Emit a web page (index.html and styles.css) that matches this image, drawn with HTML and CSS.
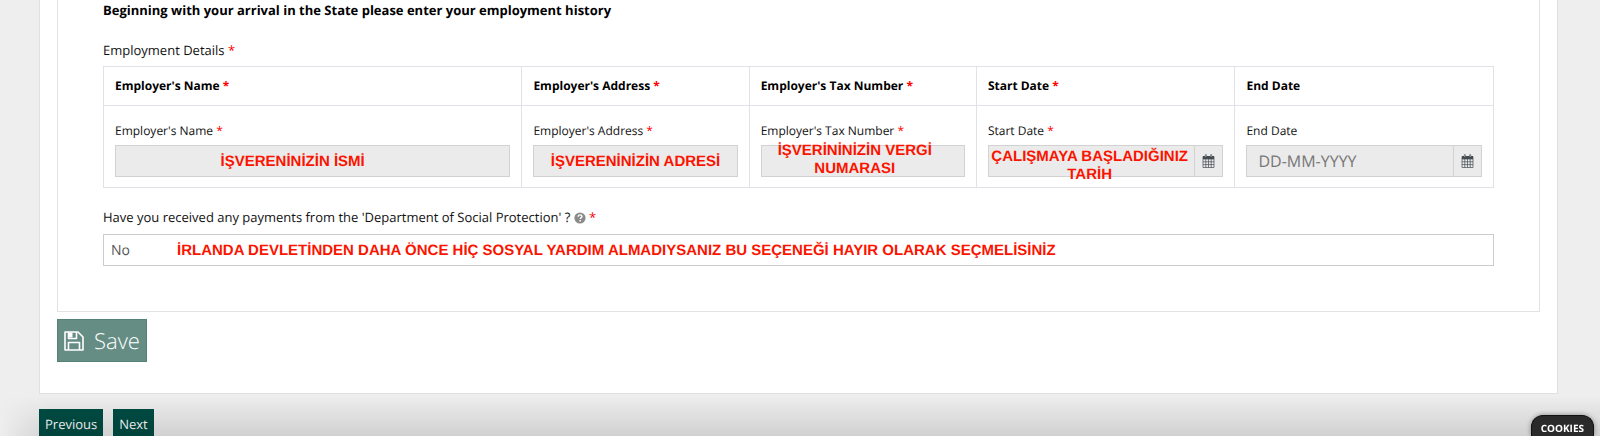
FILE: index.html
```
<!DOCTYPE html>
<html lang="en">
<head>
    <meta charset="UTF-8">
    <meta name="viewport" content="width=device-width, initial-scale=1.0">
    <title>Employment History</title>
    <link rel="stylesheet" href="styles.css">
</head>
<body>

    <main class="card">
        <section class="panel">
            <h1>Beginning with your arrival in the State please enter your employment history</h1>

            <!-- Employment table -->
            <p class="caption" id="details">Employment Details <span class="req">*</span></p>
            <table class="employment" aria-labelledby="details">
                <colgroup>
                    <col class="col-name">
                    <col class="col-text">
                    <col class="col-text">
                    <col>
                    <col>
                </colgroup>
                <thead>
                    <tr>
                        <th>Employer's Name <span class="req">*</span></th>
                        <th>Employer's Address <span class="req">*</span></th>
                        <th>Employer's Tax Number <span class="req">*</span></th>
                        <th>Start Date <span class="req">*</span></th>
                        <th>End Date</th>
                    </tr>
                </thead>
                <tbody>
                    <tr>
                        <td>
                            <label for="name">Employer's Name <span class="req">*</span></label>
                            <div class="field">
                                <input type="text" id="name">
                                <span class="note note-name">İŞVERENİNİZİN İSMİ</span>
                            </div>
                        </td>
                        <td>
                            <label for="address">Employer's Address <span class="req">*</span></label>
                            <div class="field">
                                <input type="text" id="address">
                                <span class="note">İŞVERENİNİZİN ADRESİ</span>
                            </div>
                        </td>
                        <td>
                            <label for="tax">Employer's Tax Number <span class="req">*</span></label>
                            <div class="field">
                                <input type="text" id="tax">
                                <span class="note note-tax">İŞVERİNİNİZİN VERGİ<br>NUMARASI</span>
                            </div>
                        </td>
                        <td>
                            <label for="start">Start Date <span class="req">*</span></label>
                            <div class="field">
                                <input type="text" id="start">
                                <button class="calendar" aria-label="Pick start date">
                                    <svg viewBox="0 0 13 14" width="13" height="14"><path d="M1 2.5h11v11H1zM1 5h11M1 7.8h11M1 10.6h11M3.8 5v8.5M6.5 5v8.5M9.2 5v8.5" fill="none" stroke="#444b50" stroke-width="0.7"/><path d="M1 2h11v3H1z" fill="#444b50"/><path d="M3.8 0.5v3M9.2 0.5v3" stroke="#444b50" stroke-width="1.8"/><path d="M3.8 1v2M9.2 1v2" stroke="#ebebeb" stroke-width="0.6"/></svg>
                                </button>
                                <span class="note note-date">ÇALIŞMAYA BAŞLADIĞINIZ<br>TARİH</span>
                            </div>
                        </td>
                        <td>
                            <label for="end">End Date</label>
                            <div class="field">
                                <input type="text" id="end" placeholder="DD-MM-YYYY">
                                <button class="calendar" aria-label="Pick end date">
                                    <svg viewBox="0 0 13 14" width="13" height="14"><path d="M1 2.5h11v11H1zM1 5h11M1 7.8h11M1 10.6h11M3.8 5v8.5M6.5 5v8.5M9.2 5v8.5" fill="none" stroke="#444b50" stroke-width="0.7"/><path d="M1 2h11v3H1z" fill="#444b50"/><path d="M3.8 0.5v3M9.2 0.5v3" stroke="#444b50" stroke-width="1.8"/><path d="M3.8 1v2M9.2 1v2" stroke="#ebebeb" stroke-width="0.6"/></svg>
                                </button>
                            </div>
                        </td>
                    </tr>
                </tbody>
            </table>

            <!-- Payments question -->
            <label class="question" for="payments">Have you received any payments from the 'Department of Social Protection' ?
                <svg class="help" viewBox="0 0 12 12" width="12" height="12"><circle cx="6" cy="6" r="5.6" fill="#8a8a8a"/><path d="M4.1 4.7C4.2 3.4 5 2.9 6 2.9c1.1 0 1.9.6 1.9 1.6C7.9 5.7 6.2 5.8 6.2 7.1" fill="none" stroke="#fff" stroke-width="1.4"/><path d="M5.4 8h1.5v1.4H5.4z" fill="#fff"/></svg>
                <span class="req">*</span></label>
            <div class="field">
                <select id="payments">
                    <option>No</option>
                    <option>Yes</option>
                </select>
                <span class="note note-payments">İRLANDA DEVLETİNDEN DAHA ÖNCE HİÇ SOSYAL YARDIM ALMADIYSANIZ BU SEÇENEĞİ HAYIR OLARAK SEÇMELİSİNİZ</span>
            </div>
        </section>

        <button class="save">
            <svg viewBox="0 0 20 20" width="20" height="20" fill="none" stroke="#fff" stroke-width="1.6" stroke-linejoin="round"><path d="M1 1h13l5 5v13H1z"/><path d="M4.5 19v-7.5h11V19"/><path d="M4.5 1v6.5h8V1"/><path d="M5 1.5h3.5v5H5z" fill="#fff" stroke="none"/></svg>
            Save
        </button>
    </main>

    <nav class="pager">
        <button>Previous</button>
        <button>Next</button>
    </nav>

    <div class="shade"></div>
    <button class="cookies">COOKIES</button>

</body>
</html>
```
FILE: styles.css
```
* {
    box-sizing: border-box;
}

body {
    margin: 0;
    background: #eee;
    color: #111;
    font: 13px/20px "Open Sans", sans-serif;
    text-rendering: geometricPrecision;
}

button, input, select {
    font-family: inherit;
    text-rendering: inherit;
    margin: 0;
    border-radius: 0;
}

.card {
    margin: 0 42px 0 39px;
    padding: 0 17px 31px;
    background: #fff;
    border: 1px solid #dee0e1;
    border-top: 0;
}

.panel {
    padding: 0 45px 45px;
    border: 1px solid #e1e3e5;
    border-top: 0;
}

h1 {
    margin: 0 0 20px;
    font-size: 13px;
    line-height: 20px;
    color: #000;
}

.caption {
    margin: 0 0 6px;
}

.req {
    color: #f00;
}

/* Employment table */
.employment {
    width: 100%;
    table-layout: fixed;
    border-collapse: collapse;
    font-size: 12px;
}

.col-name {
    width: 30.1%;
}

.col-text {
    width: 16.35%;
}

th, td {
    padding: 9px 11px;
    border: 1px solid #dfe3e7;
    text-align: left;
}

th {
    color: #000;
}

td {
    padding-top: 15px;
    padding-bottom: 10px;
}

td label {
    display: block;
    margin-bottom: 4px;
}

.field {
    position: relative;
    display: flex;
}

.field input {
    flex: 1;
    min-width: 0;
    height: 32px;
    padding: 0 11px;
    background: #ebebeb;
    border: 1px solid #d2d2d2;
    font-size: 16px;
}

.field input::placeholder {
    color: #777;
}

.calendar {
    display: flex;
    align-items: center;
    justify-content: center;
    width: 28px;
    padding: 0;
    background: #ebebeb;
    border: 1px solid #d2d2d2;
    border-left: 0;
}

/* Red notes written over the fields */
.note {
    position: absolute;
    inset: 2px 0 0;
    display: flex;
    align-items: center;
    justify-content: center;
    color: #fb1400;
    font: bold 15px/18px "Liberation Sans", sans-serif;
    text-align: center;
    white-space: nowrap;
    pointer-events: none;
}

.note-name {
    right: 40px;
}

.note-tax {
    right: 16px;
    bottom: 4px;
}

.note-date {
    right: 32px;
    bottom: -8px;
}

.note-payments {
    left: 74px;
    justify-content: flex-start;
}

/* Payments question */
.question {
    display: block;
    margin: 19px 0 7px;
}

.help {
    vertical-align: -2px;
}

select {
    width: 100%;
    height: 32px;
    padding: 0 7px;
    appearance: none;
    background: #fff;
    border: 1px solid #ccc;
    color: #555;
    font-size: 14px;
}

.save {
    display: flex;
    align-items: center;
    gap: 10px;
    height: 43px;
    margin-top: 7px;
    padding: 0 6px;
    background: #658d84;
    border: 1px solid #558178;
    color: #fff;
    font-size: 22px;
    font-weight: 300;
}

.pager {
    display: flex;
    gap: 10px;
    padding: 15px 39px 0;
}

.pager button {
    height: 30px;
    padding: 0 6px;
    background: #004d44;
    border: 0;
    color: #fff;
    font-size: 13px;
}

.shade {
    position: fixed;
    inset: auto 0 0;
    height: 40px;
    background: linear-gradient(rgba(0, 0, 0, 0), rgba(0, 0, 0, 0.12));
    -webkit-mask-image: linear-gradient(to right, transparent, #000 50px);
    mask-image: linear-gradient(to right, transparent, #000 50px);
    pointer-events: none;
}

.cookies {
    position: fixed;
    right: 6px;
    bottom: 0;
    height: 21px;
    padding: 4px 9px 0;
    background: #2a2a2a;
    border: 1px solid #111;
    border-bottom: 0;
    border-radius: 12px 12px 0 0;
    box-shadow: 0 0 5px rgba(0, 0, 0, 0.4);
    color: #fff;
    font-size: 10px;
    font-weight: bold;
}
```
